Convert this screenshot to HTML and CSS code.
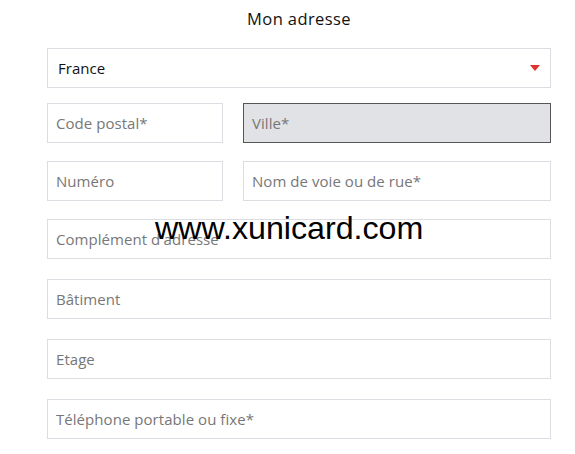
FILE: index.html
```html
<!DOCTYPE html>
<html lang="fr">
<head>
<meta charset="utf-8">
<link rel="stylesheet" href="styles.css">
</head>
<body>
<div class="page">
  <form class="form">
    <h2 class="title">Mon adresse</h2>
    <div class="field select">
      <span class="value">France</span>
      <svg class="caret" width="10" height="6" viewBox="0 0 10 6"><path d="M0 0H10L5 6Z" fill="#e2312d"/></svg>
    </div>
    <div class="row r2">
      <div class="field small"><span class="ph">Code postal*</span></div>
      <div class="field big disabled"><span class="ph">Ville*</span></div>
    </div>
    <div class="row r3">
      <div class="field small"><span class="ph">Numéro</span></div>
      <div class="field big"><span class="ph">Nom de voie ou de rue*</span></div>
    </div>
    <div class="field full r4"><span class="ph">Complément d'adresse</span></div>
    <div class="field full r5"><span class="ph">Bâtiment</span></div>
    <div class="field full r5"><span class="ph">Etage</span></div>
    <div class="field full r5"><span class="ph">Téléphone portable ou fixe*</span></div>
  </form>
  <div class="watermark">www.xunicard.com</div>
</div>
</body>
</html>
```
FILE: styles.css
```css
html, body {
  margin: 0;
  padding: 0;
  background: #fff;
}
.page {
  position: relative;
  width: 575px;
  height: 454px;
  font-family: "Open Sans", "Liberation Sans", sans-serif;
}
.form {
  margin: 0 0 0 47px;
  width: 504px;
  display: flex;
  flex-direction: column;
}
.title {
  margin: 0;
  height: 48px;
  padding-top: 8px;
  box-sizing: border-box;
  text-align: center;
  font-size: 16.5px;
  letter-spacing: 0.4px;
  font-weight: 500;
  color: #111;
  line-height: 22px;
}
.field {
  height: 40px;
  box-sizing: border-box;
  border: 1px solid #dcdde2;
  background: #fff;
  display: flex;
  align-items: center;
  padding: 0 8px;
  font-size: 15px;
  letter-spacing: 0.05px;
}
.ph {
  color: #777;
}
.select {
  padding: 0 10px 0 10px;
  justify-content: space-between;
}
.select .value {
  color: #111;
}
.caret {
  display: block;
}
.row {
  display: flex;
  gap: 20px;
}
.small {
  width: 176px;
}
.big {
  flex: 1;
}
.disabled {
  background: #e1e2e6;
  border-color: #555;
}
.r2 { margin-top: 15px; }
.r3 { margin-top: 18px; }
.r4 { margin-top: 18px; }
.r5 { margin-top: 20px; }
.watermark {
  position: absolute;
  left: 155px;
  top: 209px;
  font-family: "Liberation Sans", Arial, sans-serif;
  font-size: 32.2px;
  line-height: 38px;
  color: #000;
}
```
